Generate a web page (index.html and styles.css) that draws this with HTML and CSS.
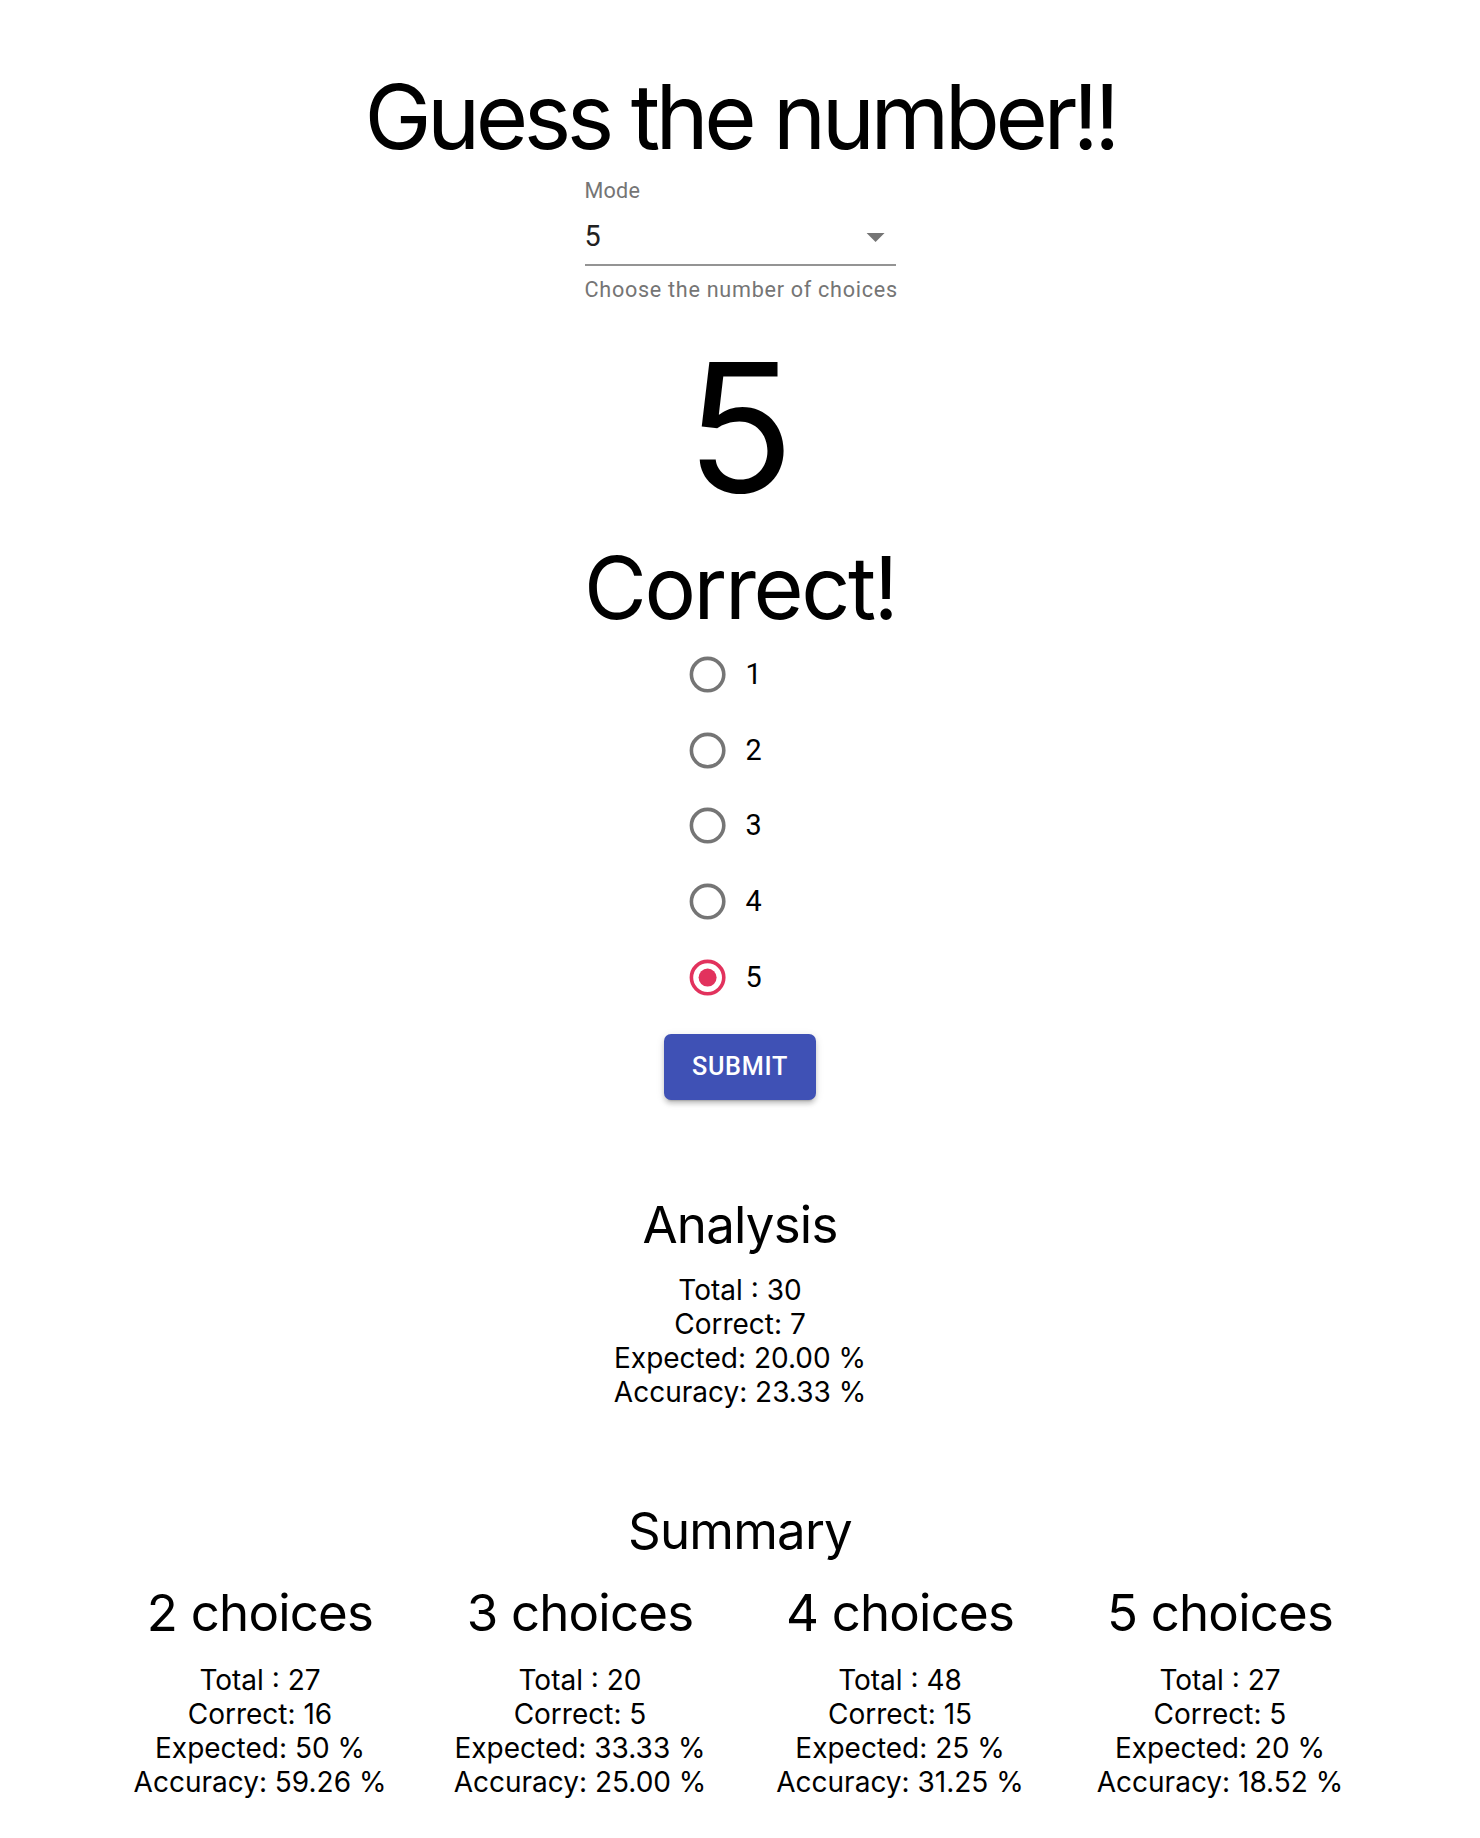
FILE: index.html
```html
<!DOCTYPE html>
<html lang="en">
<head>
<meta charset="utf-8">
<title>Guess the number!!</title>
<link rel="stylesheet" href="styles.css">
</head>
<body>
<div class="app">
  <h1 class="title">Guess the number!!</h1>

  <div class="select">
    <div class="select-label">Mode</div>
    <div class="select-input">
      <span class="select-value">5</span>
      <svg class="select-arrow" viewBox="0 0 24 24" width="43" height="43"><path d="M7 10l5 5 5-5z" fill="#757575"/></svg>
    </div>
    <div class="select-helper">Choose the number of choices</div>
  </div>

  <div class="big">5</div>
  <div class="correct">Correct!</div>

  <div class="radios">
    <label class="radio-row">
      <span class="radio"><svg viewBox="0 0 24 24" width="43" height="43"><circle cx="12" cy="12" r="9" fill="none" stroke="#757575" stroke-width="2"/></svg></span>
      <span class="radio-label">1</span>
    </label>
    <label class="radio-row">
      <span class="radio"><svg viewBox="0 0 24 24" width="43" height="43"><circle cx="12" cy="12" r="9" fill="none" stroke="#757575" stroke-width="2"/></svg></span>
      <span class="radio-label">2</span>
    </label>
    <label class="radio-row">
      <span class="radio"><svg viewBox="0 0 24 24" width="43" height="43"><circle cx="12" cy="12" r="9" fill="none" stroke="#757575" stroke-width="2"/></svg></span>
      <span class="radio-label">3</span>
    </label>
    <label class="radio-row">
      <span class="radio"><svg viewBox="0 0 24 24" width="43" height="43"><circle cx="12" cy="12" r="9" fill="none" stroke="#757575" stroke-width="2"/></svg></span>
      <span class="radio-label">4</span>
    </label>
    <label class="radio-row">
      <span class="radio"><svg viewBox="0 0 24 24" width="43" height="43"><circle cx="12" cy="12" r="9" fill="none" stroke="#e2325d" stroke-width="2"/><circle cx="12" cy="12" r="5" fill="#e2325d"/></svg></span>
      <span class="radio-label">5</span>
    </label>
  </div>

  <button class="btn">Submit</button>

  <h2 class="section analysis-h">Analysis</h2>
  <div class="lines analysis-lines">
    <div>Total : 30</div>
    <div>Correct: 7</div>
    <div>Expected: 20.00 %</div>
    <div>Accuracy: 23.33 %</div>
  </div>

  <h2 class="section summary-h">Summary</h2>
  <div class="grid">
    <div class="col">
      <h3 class="col-h">2 choices</h3>
      <div class="lines col-lines">
        <div>Total : 27</div>
        <div>Correct: 16</div>
        <div>Expected: 50 %</div>
        <div>Accuracy: 59.26 %</div>
      </div>
    </div>
    <div class="col">
      <h3 class="col-h">3 choices</h3>
      <div class="lines col-lines">
        <div>Total : 20</div>
        <div>Correct: 5</div>
        <div>Expected: 33.33 %</div>
        <div>Accuracy: 25.00 %</div>
      </div>
    </div>
    <div class="col">
      <h3 class="col-h">4 choices</h3>
      <div class="lines col-lines">
        <div>Total : 48</div>
        <div>Correct: 15</div>
        <div>Expected: 25 %</div>
        <div>Accuracy: 31.25 %</div>
      </div>
    </div>
    <div class="col">
      <h3 class="col-h">5 choices</h3>
      <div class="lines col-lines">
        <div>Total : 27</div>
        <div>Correct: 5</div>
        <div>Expected: 20 %</div>
        <div>Accuracy: 18.52 %</div>
      </div>
    </div>
  </div>
</div>
</body>
</html>
```

FILE: styles.css
```css
html, body {
  margin: 0;
  padding: 0;
  background: #ffffff;
}

body {
  font-family: Inter, "Noto Sans", sans-serif;
  color: #000000;
}

.app {
  display: flex;
  flex-direction: column;
  align-items: center;
  text-align: center;
  padding-bottom: 40px;
}

.title {
  margin: 63px 0 0;
  font-size: 90px;
  line-height: 108px;
  font-weight: 400;
  letter-spacing: -4.5px;
}

.select {
  margin-top: 9px;
  width: 311px;
  display: flex;
  flex-direction: column;
  text-align: left;
  font-family: Roboto, "Liberation Sans", sans-serif;
}

.select-label {
  font-size: 21.6px;
  line-height: 1;
  color: #757575;
  letter-spacing: 0.00938em;
}

.select-input {
  margin-top: 7.2px;
  height: 55.6px;
  border-bottom: 2px solid #949494;
  display: flex;
  align-items: center;
  justify-content: space-between;
}

.select-value {
  font-size: 28.8px;
  line-height: 34.2px;
  color: #212121;
}

.select-arrow {
  display: block;
  width: 43.2px;
  height: 43.2px;
  margin-right: -2px;
}

.select-helper {
  margin-top: 5.4px;
  font-size: 21.6px;
  line-height: 35.9px;
  letter-spacing: 0.0333em;
  color: #757575;
  white-space: nowrap;
}

.big {
  margin-top: 31.6px;
  font-size: 178px;
  line-height: 1;
}

.correct {
  margin-top: 27.4px;
  font-size: 86px;
  line-height: 1;
  letter-spacing: -2.4px;
}

.radios {
  margin-top: 6.3px;
  width: 140px;
  display: flex;
  flex-direction: column;
  align-items: flex-start;
}

.radio-row {
  height: 75.6px;
  display: flex;
  align-items: center;
  font-family: Roboto, "Liberation Sans", sans-serif;
}

.radio {
  width: 75.6px;
  height: 75.6px;
  display: flex;
  align-items: center;
  justify-content: center;
}

.radio svg {
  display: block;
  width: 43.2px;
  height: 43.2px;
}

.radio-label {
  font-size: 28.8px;
  line-height: 1.5;
  color: #000000;
  letter-spacing: 0.00938em;
}

.btn {
  margin-top: 19px;
  width: 152px;
  height: 66px;
  border: none;
  border-radius: 7px;
  background: #3f51b5;
  color: #ffffff;
  font-family: Roboto, "Liberation Sans", sans-serif;
  font-weight: 500;
  font-size: 25.2px;
  letter-spacing: 0.02857em;
  text-transform: uppercase;
  box-shadow: 0 5px 2px -4px rgba(0,0,0,0.2), 0 4px 4px 0 rgba(0,0,0,0.14), 0 2px 9px 0 rgba(0,0,0,0.12);
  padding: 0;
}

.section {
  font-size: 51px;
  line-height: 1;
  font-weight: 400;
  margin: 0;
  letter-spacing: -0.8px;
}

.analysis-h {
  margin-top: 99px;
}

.lines {
  font-size: 28px;
  line-height: 34px;
}

.analysis-lines {
  margin-top: 23px;
}

.summary-h {
  margin-top: 96px;
}

.grid {
  margin-top: 31px;
  width: 1280px;
  display: grid;
  grid-template-columns: repeat(4, 1fr);
}

.col {
  display: flex;
  flex-direction: column;
  align-items: center;
}

.col-h {
  margin: 0;
  font-size: 51px;
  line-height: 1;
  font-weight: 400;
  letter-spacing: -0.8px;
}

.col-lines {
  margin-top: 25.5px;
}
```
